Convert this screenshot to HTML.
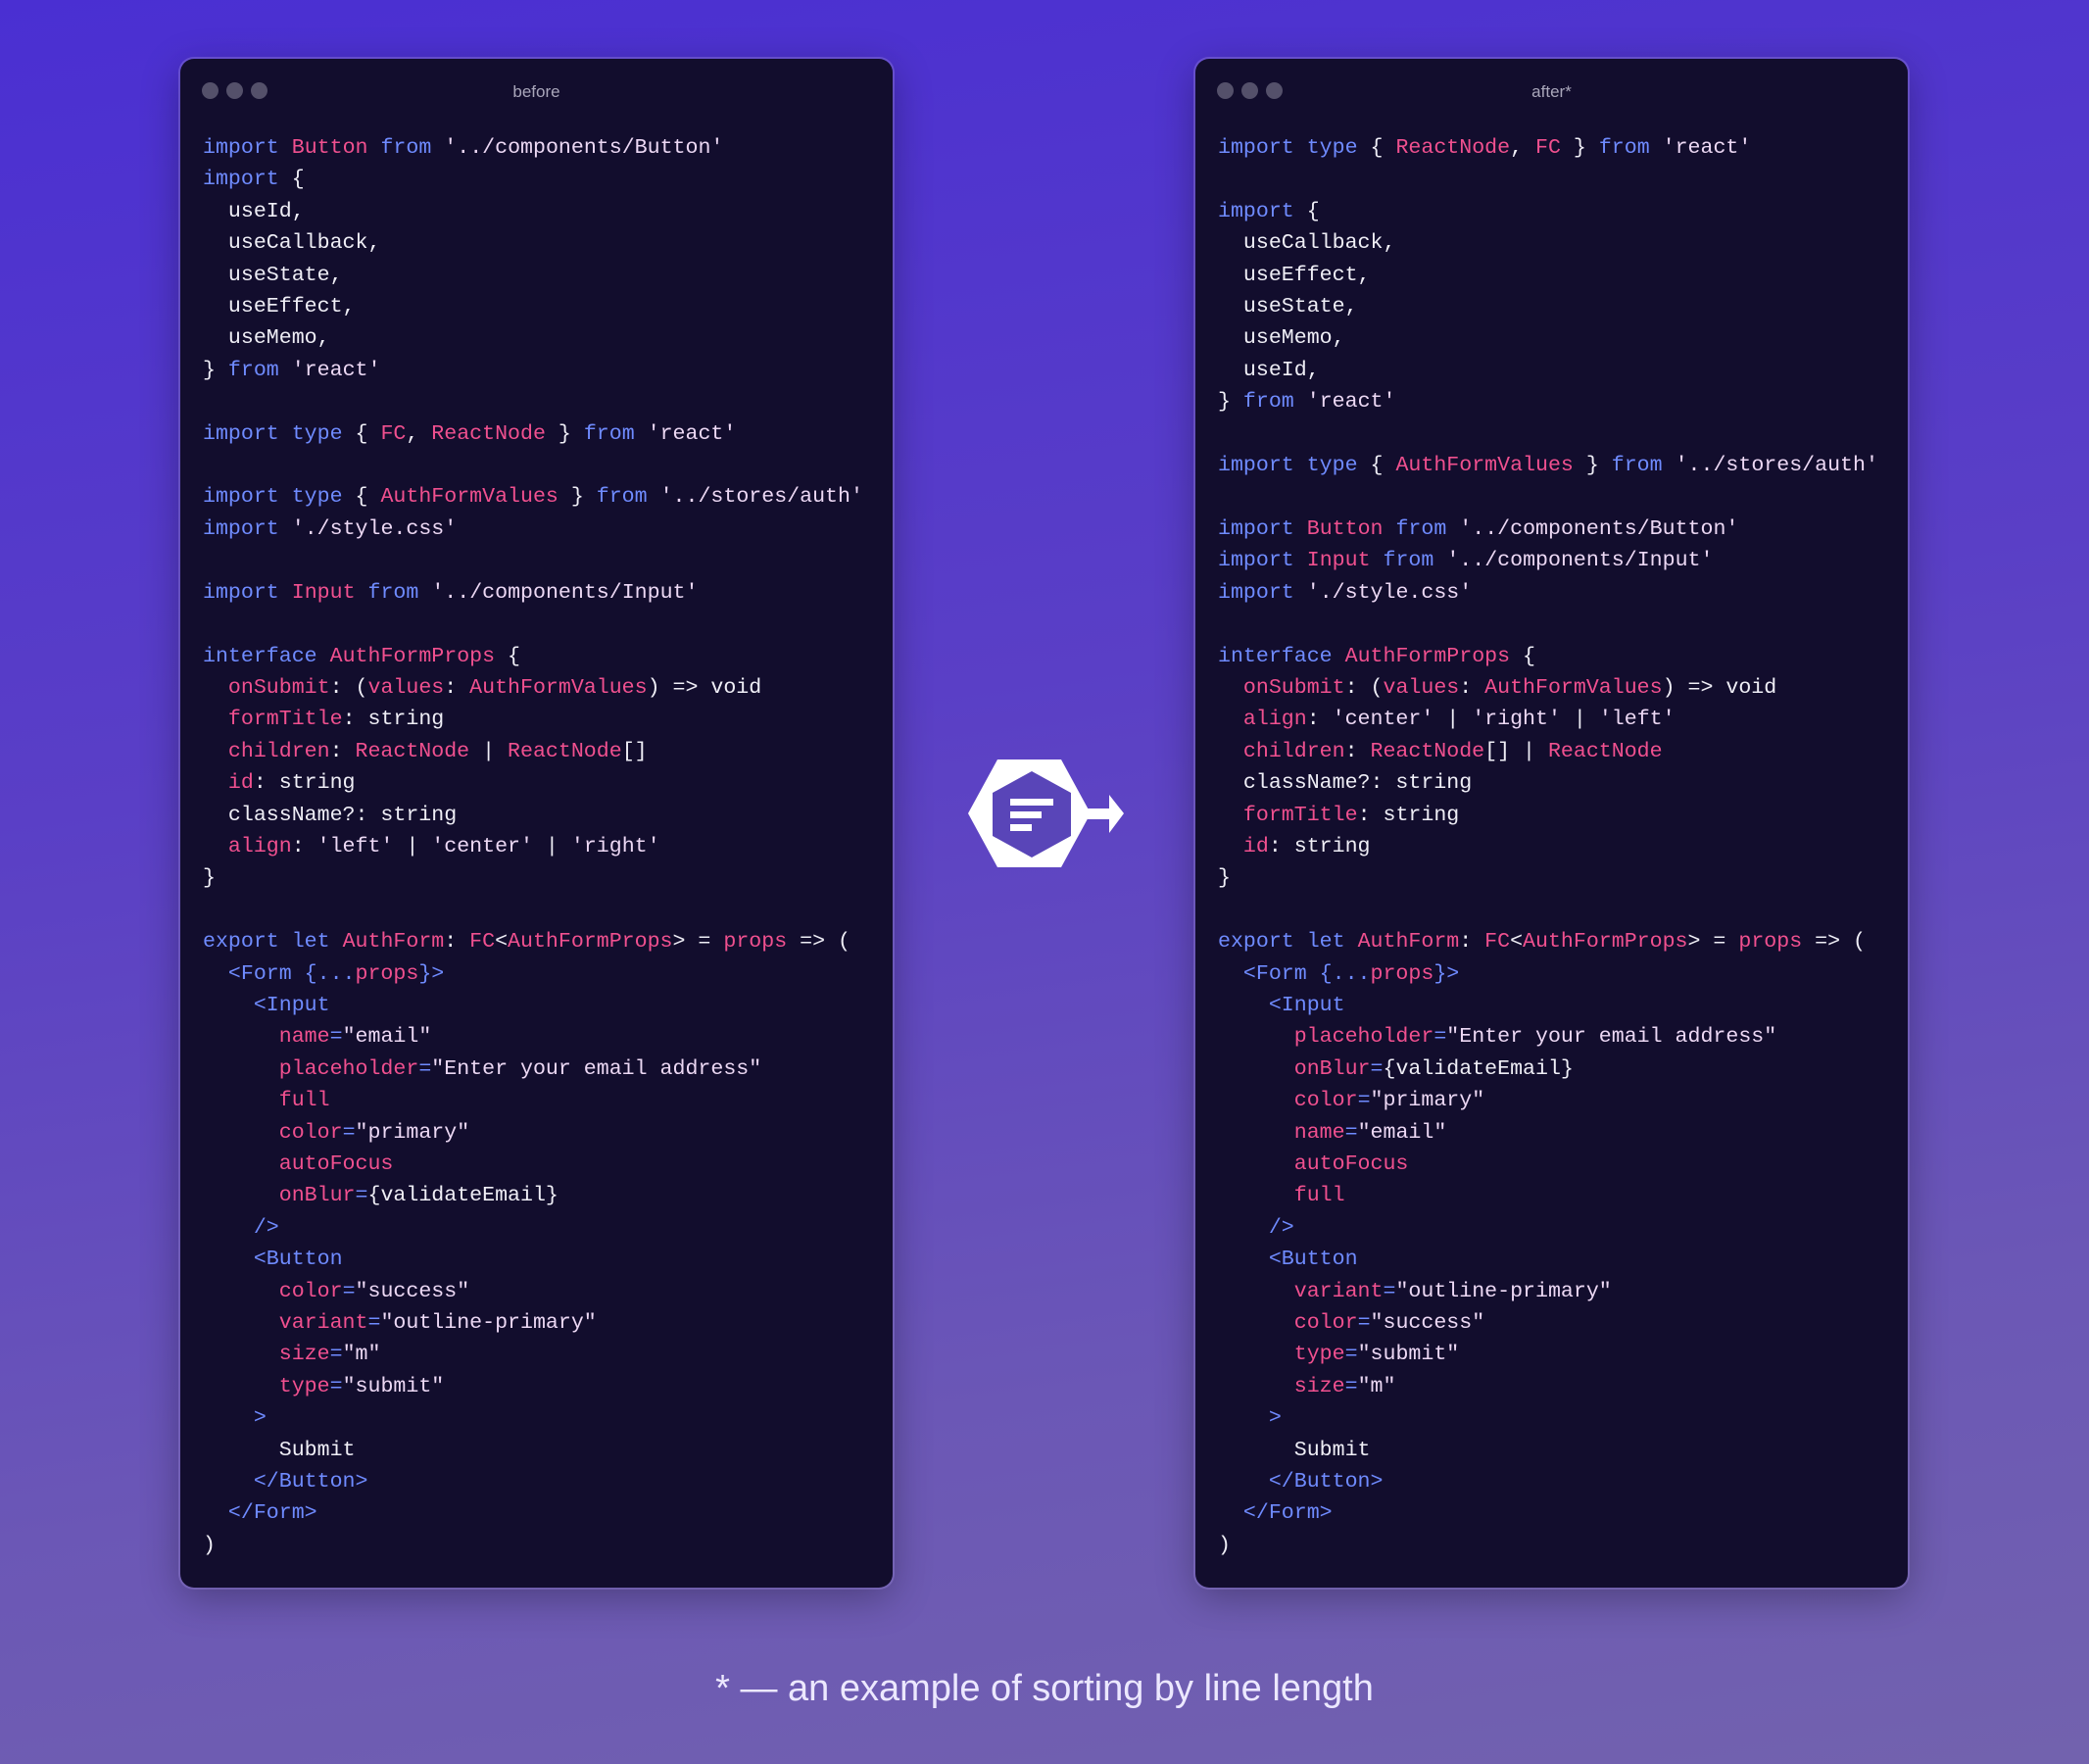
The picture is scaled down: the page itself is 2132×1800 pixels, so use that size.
<!DOCTYPE html>
<html><head><meta charset="utf-8"><style>
html,body{margin:0;padding:0}
body{width:2132px;height:1800px;overflow:hidden;background:linear-gradient(172deg,#4a2fd2 0%,#5a3fc6 40%,#6b57b6 75%,#7262ae 100%);position:relative;font-family:"Liberation Sans",sans-serif}
.panel{position:absolute;top:60px;width:727px;height:1560px;background:#120d2d;border-radius:14px;box-shadow:0 0 0 2px rgba(160,140,230,.35),0 10px 40px rgba(0,0,0,.3)}
.dot{position:absolute;width:17px;height:17px;border-radius:50%;background:#54506a}
.title{position:absolute;width:100%;text-align:center;color:#a9a6ba;font-size:17px}
pre{position:absolute;left:23px;top:75px;margin:0;font-family:"Liberation Mono",monospace;font-size:21.6px;line-height:32.4px;color:#efeef6}
.k{color:#6f8bff}.p{color:#f0508f}.s{color:#ecd8f4}
.cap{position:absolute;left:0;width:2132px;top:1702px;text-align:center;color:#ece8ff;font-size:38px}
</style></head><body>
<div class="panel" style="left:184px">
<div class="dot" style="left:22px;top:24px"></div><div class="dot" style="left:47px;top:24px"></div><div class="dot" style="left:72px;top:24px"></div>
<div class="title" style="top:24px">before</div>
<pre><span class="k">import</span> <span class="p">Button</span> <span class="k">from</span> <span class="s">'../components/Button'</span>
<span class="k">import</span> {
  useId,
  useCallback,
  useState,
  useEffect,
  useMemo,
} <span class="k">from</span> <span class="s">'react'</span>

<span class="k">import type</span> { <span class="p">FC</span>, <span class="p">ReactNode</span> } <span class="k">from</span> <span class="s">'react'</span>

<span class="k">import type</span> { <span class="p">AuthFormValues</span> } <span class="k">from</span> <span class="s">'../stores/auth'</span>
<span class="k">import</span> <span class="s">'./style.css'</span>

<span class="k">import</span> <span class="p">Input</span> <span class="k">from</span> <span class="s">'../components/Input'</span>

<span class="k">interface</span> <span class="p">AuthFormProps</span> {
  <span class="p">onSubmit</span>: (<span class="p">values</span>: <span class="p">AuthFormValues</span>) =&gt; void
  <span class="p">formTitle</span>: string
  <span class="p">children</span>: <span class="p">ReactNode</span> | <span class="p">ReactNode</span>[]
  <span class="p">id</span>: string
  className?: string
  <span class="p">align</span>: <span class="s">'left'</span> | <span class="s">'center'</span> | <span class="s">'right'</span>
}

<span class="k">export let</span> <span class="p">AuthForm</span>: <span class="p">FC</span>&lt;<span class="p">AuthFormProps</span>&gt; = <span class="p">props</span> =&gt; (
  <span class="k">&lt;Form {...</span><span class="p">props</span><span class="k">}&gt;</span>
    <span class="k">&lt;Input</span>
      <span class="p">name</span><span class="k">=</span><span class="s">"email"</span>
      <span class="p">placeholder</span><span class="k">=</span><span class="s">"Enter your email address"</span>
      <span class="p">full</span>
      <span class="p">color</span><span class="k">=</span><span class="s">"primary"</span>
      <span class="p">autoFocus</span>
      <span class="p">onBlur</span><span class="k">=</span>{validateEmail}
    <span class="k">/&gt;</span>
    <span class="k">&lt;Button</span>
      <span class="p">color</span><span class="k">=</span><span class="s">"success"</span>
      <span class="p">variant</span><span class="k">=</span><span class="s">"outline-primary"</span>
      <span class="p">size</span><span class="k">=</span><span class="s">"m"</span>
      <span class="p">type</span><span class="k">=</span><span class="s">"submit"</span>
    <span class="k">&gt;</span>
      Submit
    <span class="k">&lt;/Button&gt;</span>
  <span class="k">&lt;/Form&gt;</span>
)</pre>
</div>
<div class="panel" style="left:1220px">
<div class="dot" style="left:22px;top:24px"></div><div class="dot" style="left:47px;top:24px"></div><div class="dot" style="left:72px;top:24px"></div>
<div class="title" style="top:24px">after*</div>
<pre><span class="k">import type</span> { <span class="p">ReactNode</span>, <span class="p">FC</span> } <span class="k">from</span> <span class="s">'react'</span>

<span class="k">import</span> {
  useCallback,
  useEffect,
  useState,
  useMemo,
  useId,
} <span class="k">from</span> <span class="s">'react'</span>

<span class="k">import type</span> { <span class="p">AuthFormValues</span> } <span class="k">from</span> <span class="s">'../stores/auth'</span>

<span class="k">import</span> <span class="p">Button</span> <span class="k">from</span> <span class="s">'../components/Button'</span>
<span class="k">import</span> <span class="p">Input</span> <span class="k">from</span> <span class="s">'../components/Input'</span>
<span class="k">import</span> <span class="s">'./style.css'</span>

<span class="k">interface</span> <span class="p">AuthFormProps</span> {
  <span class="p">onSubmit</span>: (<span class="p">values</span>: <span class="p">AuthFormValues</span>) =&gt; void
  <span class="p">align</span>: <span class="s">'center'</span> | <span class="s">'right'</span> | <span class="s">'left'</span>
  <span class="p">children</span>: <span class="p">ReactNode</span>[] | <span class="p">ReactNode</span>
  className?: string
  <span class="p">formTitle</span>: string
  <span class="p">id</span>: string
}

<span class="k">export let</span> <span class="p">AuthForm</span>: <span class="p">FC</span>&lt;<span class="p">AuthFormProps</span>&gt; = <span class="p">props</span> =&gt; (
  <span class="k">&lt;Form {...</span><span class="p">props</span><span class="k">}&gt;</span>
    <span class="k">&lt;Input</span>
      <span class="p">placeholder</span><span class="k">=</span><span class="s">"Enter your email address"</span>
      <span class="p">onBlur</span><span class="k">=</span>{validateEmail}
      <span class="p">color</span><span class="k">=</span><span class="s">"primary"</span>
      <span class="p">name</span><span class="k">=</span><span class="s">"email"</span>
      <span class="p">autoFocus</span>
      <span class="p">full</span>
    <span class="k">/&gt;</span>
    <span class="k">&lt;Button</span>
      <span class="p">variant</span><span class="k">=</span><span class="s">"outline-primary"</span>
      <span class="p">color</span><span class="k">=</span><span class="s">"success"</span>
      <span class="p">type</span><span class="k">=</span><span class="s">"submit"</span>
      <span class="p">size</span><span class="k">=</span><span class="s">"m"</span>
    <span class="k">&gt;</span>
      Submit
    <span class="k">&lt;/Button&gt;</span>
  <span class="k">&lt;/Form&gt;</span>
)</pre>
</div>
<svg style="position:absolute;left:0;top:0" width="2132" height="1800">
<polygon points="988,830 1018,775 1083,775 1113,830 1083,885 1018,885" fill="#fff"/>
<polygon points="1053,787 1093,809 1093,853 1053,875 1013,853 1013,809" fill="#5945b8"/>
<rect x="1031" y="815" width="44" height="7" fill="#fff"/>
<rect x="1031" y="828" width="32" height="7" fill="#fff"/>
<rect x="1031" y="841" width="22" height="7" fill="#fff"/>
<rect x="1110" y="825" width="24" height="11" fill="#fff"/>
<polygon points="1132,811 1147,830 1132,850" fill="#fff"/>
</svg>
<div class="cap">* — an example of sorting by line length</div>
</body></html>
